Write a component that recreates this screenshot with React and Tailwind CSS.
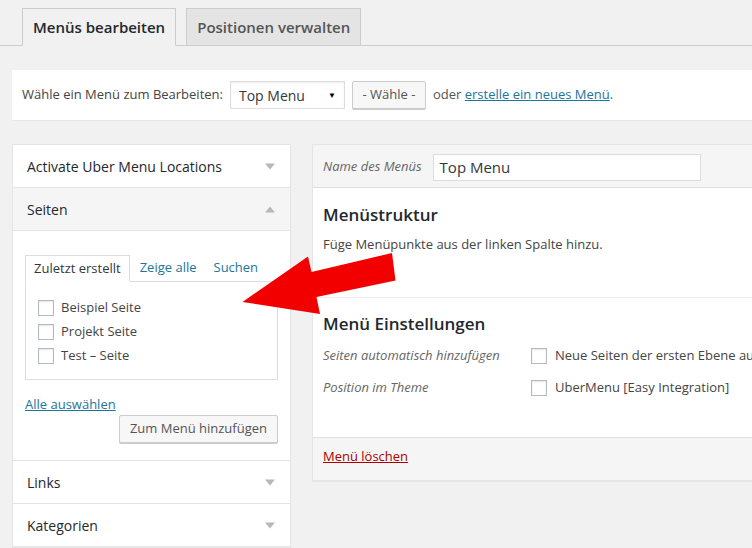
import React from 'react';

const font = { fontFamily: '"Open Sans", "Liberation Sans", sans-serif' };

const Caret = ({ up }) => (
  <svg width="10" height="7" viewBox="0 0 10 7" className="text-[#b4b9be]">
    {up ? <path d="M0 6.5 L5 0.5 L10 6.5 Z" fill="currentColor" /> : <path d="M0 0.5 L10 0.5 L5 6.5 Z" fill="currentColor" />}
  </svg>
);

const PanelHeader = ({ title, up, gray }) => (
  <div className={`flex items-center justify-between h-[43px] pl-[14px] pr-[15px] border-b border-[#e5e5e5] ${gray ? 'bg-[#f5f5f5]' : 'bg-white'}`}>
    <span className="text-[14px] font-medium text-[#23282d]">{title}</span>
    <Caret up={up} />
  </div>
);

const Check = () => (
  <span className="inline-block shrink-0 w-[16px] h-[16px] border border-[#b4b9be] bg-white shadow-[inset_0_1px_2px_rgba(0,0,0,0.1)]" />
);

const App = () => {
  const pages = ['Beispiel Seite', 'Projekt Seite', 'Test – Seite'];

  return (
    <div className="relative w-[752px] h-[548px] overflow-hidden bg-[#f1f1f1] text-[#444]" style={font}>
      {/* Tabs */}
      <div className="flex pt-2 pl-[22px] border-b border-[#ccc]">
        <div className="h-[38px] -mb-px px-[10px] flex items-center border border-[#ccc] border-b-[#f1f1f1] bg-[#f1f1f1] text-[15px] font-semibold text-[#23282d]">
          Menüs bearbeiten
        </div>
        <div className="h-[37px] ml-[10px] px-[10px] flex items-center border border-b-0 border-[#ccc] bg-[#e4e4e4] text-[15px] font-semibold text-[#555]">
          Positionen verwalten
        </div>
      </div>

      {/* Select menu bar */}
      <div className="mt-[24px] ml-[12px] w-[760px] h-[50px] bg-white shadow-[0_1px_1px_rgba(0,0,0,0.04)] flex items-center pl-[10px] text-[13px]">
        <span className="text-[#444]">Wähle ein Menü zum Bearbeiten:</span>
        <div className="ml-[7px] w-[115px] h-[28px] border border-[#ddd] shadow-[inset_0_1px_2px_rgba(0,0,0,0.07)] flex items-center justify-between pl-[8px] pr-[8px] text-[14px] text-[#32373c]">
          <span>Top Menu</span>
          <span className="text-[8px] text-black">▼</span>
        </div>
        <div className="ml-[7px] w-[74px] h-[28px] border border-[#ccc] bg-[#f7f7f7] rounded-[2px] shadow-[0_1px_0_#ccc] flex items-center justify-center text-[13px] text-[#555]">
          - Wähle -
        </div>
        <span className="ml-[7px] text-[#555]">
          oder <span className="text-[#21759b] underline">erstelle ein neues Menü</span>.
        </span>
      </div>

      {/* Columns */}
      <div className="flex mt-[24px] ml-[12px] gap-[21px]">
        {/* Left column */}
        <div className="w-[279px] shrink-0 bg-white border border-[#e5e5e5] border-b-0 shadow-[0_1px_1px_rgba(0,0,0,0.04)]">
          <PanelHeader title="Activate Uber Menu Locations" />
          <PanelHeader title="Seiten" up gray />
          <div className="h-[230px] border-b border-[#e5e5e5] pt-[24px] px-[12px]">
            <div className="flex text-[13px] h-[26px]">
              <div className="px-[8px] flex items-center border border-[#ddd] border-b-white -mb-px bg-white text-[#32373c] z-10">Zuletzt erstellt</div>
              <div className="ml-[10px] flex items-center text-[#21759b]">Zeige alle</div>
              <div className="ml-[17px] flex items-center text-[#21759b]">Suchen</div>
            </div>
            <div className="h-[99px] border border-[#ddd] pt-[14px] pl-[12px]">
              {pages.map((p) => (
                <div key={p} className="flex items-center h-[24px] gap-[7px] text-[13px] text-[#444]">
                  <Check />
                  <span>{p}</span>
                </div>
              ))}
            </div>
            <div className="mt-[15px] text-[13px] text-[#21759b] underline leading-[18px]">Alle auswählen</div>
            <div className="flex justify-end mt-[2px]">
              <div className="h-[28px] px-[10px] border border-[#ccc] bg-[#f7f7f7] rounded-[2px] shadow-[0_1px_0_#ccc] flex items-center text-[13px] text-[#555]">
                Zum Menü hinzufügen
              </div>
            </div>
          </div>
          <PanelHeader title="Links" />
          <PanelHeader title="Kategorien" />
        </div>

        {/* Right column */}
        <div className="w-[480px] shrink-0 border border-[#e5e5e5] shadow-[0_1px_1px_rgba(0,0,0,0.04)] self-start">
          <div className="h-[43px] bg-[#f5f5f5] border-b border-[#dfdfdf] flex items-center pl-[10px] pt-[2px]">
            <span className="text-[13px] italic text-[#666]">Name des Menüs</span>
            <div className="ml-[11px] w-[268px] h-[27px] bg-white border border-[#ddd] flex items-center pl-[6px] text-[15px] text-[#32373c]">
              Top Menu
            </div>
          </div>
          <div className="bg-white">
            <div className="h-[110px] border-b border-[#eee] px-[10px] pt-[15px]">
              <div className="text-[17px] font-semibold text-[#23282d] leading-[24px]">Menüstruktur</div>
              <div className="mt-[8px] text-[13px] text-[#444]">Füge Menüpunkte aus der linken Spalte hinzu.</div>
            </div>
            <div className="h-[139px] px-[10px] pt-[14px]">
              <div className="text-[17px] font-semibold text-[#23282d] leading-[24px]">Menü Einstellungen</div>
              <div className="flex items-center mt-[10px] h-[20px] text-[13px]">
                <span className="w-[208px] shrink-0 whitespace-nowrap italic text-[#666]">Seiten automatisch hinzufügen</span>
                <Check />
                <span className="ml-[8px] whitespace-nowrap text-[#444]">Neue Seiten der ersten Ebene automatisch hinzufügen</span>
              </div>
              <div className="flex items-center mt-[12px] h-[20px] text-[13px]">
                <span className="w-[208px] shrink-0 whitespace-nowrap italic text-[#666]">Position im Theme</span>
                <Check />
                <span className="ml-[8px] whitespace-nowrap text-[#444]">UberMenu [Easy Integration]</span>
              </div>
            </div>
          </div>
          <div className="h-[43px] bg-[#f5f5f5] border-t border-[#dfdfdf] pt-[9px] pl-[10px]">
            <div className="text-[13px] leading-[18px] text-[#a00] underline">Menü löschen</div>
          </div>
        </div>
      </div>

      {/* Red arrow */}
      <svg className="absolute left-0 top-0 pointer-events-none" width="752" height="548" viewBox="0 0 752 548">
        <polygon points="242.5,302 308,256.5 311.5,272 392,253 395.5,280.5 316.5,297 320,314" fill="#f20000" />
      </svg>
    </div>
  );
};

export default App;
